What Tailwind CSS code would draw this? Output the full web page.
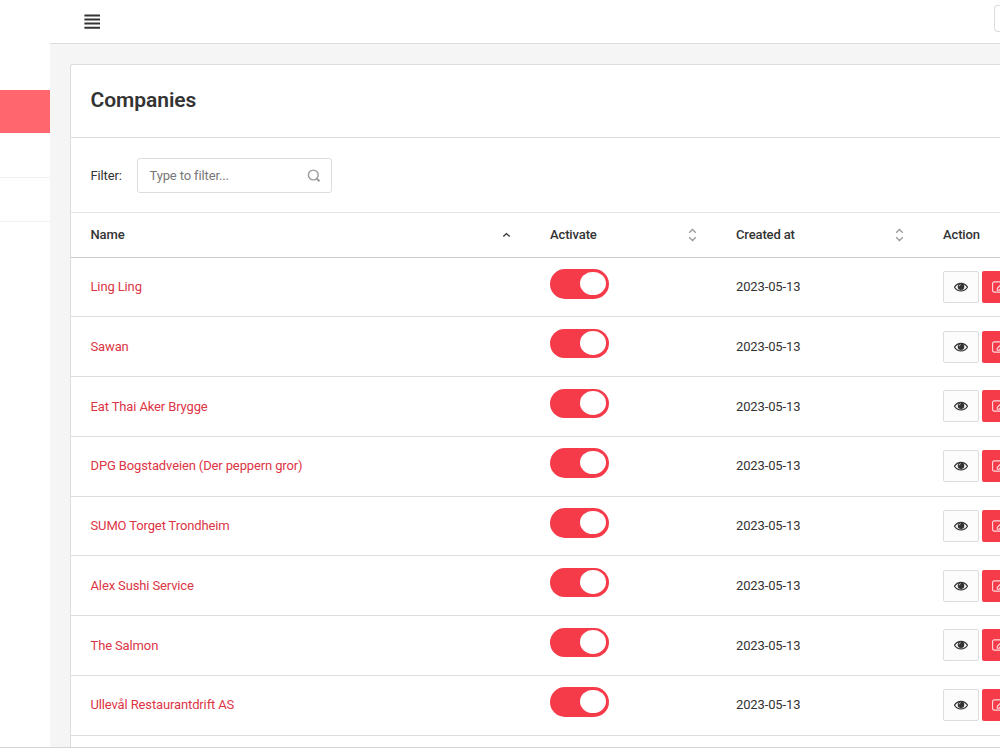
<!DOCTYPE html>
<html lang="en">
<head>
    <meta charset="UTF-8">
    <meta name="viewport" content="width=device-width, initial-scale=1.0">
    <title>Companies</title>
    <script src="https://cdn.jsdelivr.net/npm/@tailwindcss/browser@4"></script>
</head>
<body class="h-[750px] overflow-hidden bg-white font-['Roboto',sans-serif] text-[13px] tracking-[-0.13px] text-[#333]">
    <div class="flex h-[748px] w-full overflow-hidden border-b border-[#d5d5d5]">
        <!-- Sidebar -->
        <aside class="w-[50px] shrink-0 bg-white pt-[90px]">
            <a href="#" class="block h-[43px] bg-[#ff666d]"></a>
            <a href="#" class="block h-[45px] border-b border-[#f2f2f2]"></a>
            <a href="#" class="block h-[44px] border-b border-[#f2f2f2]"></a>
        </aside>

        <div class="flex min-w-0 flex-1 flex-col overflow-hidden bg-[#f5f5f5]">
            <!-- Navbar -->
            <header class="flex h-[43.5px] shrink-0 items-start border-b border-[#ddd] bg-white">
                <button class="mt-[14px] ml-[34px] shrink-0">
                    <svg class="h-[15px] w-4" viewBox="0 0 16 15" fill="#333">
                        <path d="M.4.4h16v2h-16zM.4 4.5h16v2h-16zM.4 8.6h16v2h-16zM.4 12.7h16v2h-16z"/>
                    </svg>
                </button>
                <div class="mt-[5px] ml-auto h-[27px] w-[6px] shrink-0 rounded-l border border-r-0 border-[#ddd]"></div>
            </header>

            <!-- Panel -->
            <main class="mt-5 ml-5 flex-1 overflow-hidden rounded-tl-[3px] border-t border-l border-[#ddd] bg-white">
                <div class="flex h-[73.5px] items-center border-b border-[#ddd] pl-[19.5px]">
                    <h1 class="text-[21px] font-semibold tracking-[-0.05px]">Companies</h1>
                </div>

                <div class="flex h-[74px] items-center pt-px pl-[19.5px]">
                    <span class="w-[46px]">Filter:</span>
                    <div class="flex h-[35px] w-[195.5px] items-center justify-between rounded-[3px] border border-[#ddd] pr-[10px] pl-3">
                        <span class="text-[#777]">Type to filter...</span>
                        <svg class="h-[14px] w-[14px]" viewBox="0 0 14 14" fill="none" stroke="#999">
                            <circle cx="6.3" cy="6" r="4.9" stroke-width="1.4"/>
                            <path d="M9.8 9.6l2.7 2.7" stroke-width="2"/>
                        </svg>
                    </div>
                </div>

                <table class="w-[1000px] table-fixed border-collapse">
                    <colgroup>
                        <col class="w-[459px]">
                        <col class="w-[186px]">
                        <col class="w-[207.5px]">
                        <col>
                    </colgroup>
                    <thead>
                        <tr class="h-[44.5px] border-t border-b border-t-[#e5e5e5] border-b-[#ccc] text-left">
                            <th class="pl-[19.5px] font-medium">
                                <div class="flex items-center justify-between pr-[19.5px]">Name
                                    <svg class="h-[14px] w-[9px]" viewBox="0 0 9 14" fill="none" stroke="#333" stroke-width="1.4"><path d="M1.3 8.6l3.2-3 3.2 3"/></svg>
                                </div>
                            </th>
                            <th class="pl-[20px] font-medium">
                                <div class="flex items-center justify-between pr-[19.5px]">Activate
                                    <svg class="h-[14px] w-[9px]" viewBox="0 0 9 14" fill="none" stroke="#999" stroke-width="1.3"><path d="M1.2 4.7l3.3-3.2 3.3 3.2M1.2 9.3l3.3 3.2 3.3-3.2"/></svg>
                                </div>
                            </th>
                            <th class="pl-[20px] font-medium">
                                <div class="flex items-center justify-between pr-[19.5px]">Created at
                                    <svg class="h-[14px] w-[9px]" viewBox="0 0 9 14" fill="none" stroke="#999" stroke-width="1.3"><path d="M1.2 4.7l3.3-3.2 3.3 3.2M1.2 9.3l3.3 3.2 3.3-3.2"/></svg>
                                </div>
                            </th>
                            <th class="pl-[19.5px] font-medium">Action</th>
                        </tr>
                    </thead>
                    <tbody id="companiesTableBody"></tbody>
                </table>
            </main>
        </div>
    </div>

    <script>
        const companies = [
            'Ling Ling',
            'Sawan',
            'Eat Thai Aker Brygge',
            'DPG Bogstadveien (Der peppern gror)',
            'SUMO Torget Trondheim',
            'Alex Sushi Service',
            'The Salmon',
            'Ullevål Restaurantdrift AS'
        ];

        document.getElementById('companiesTableBody').innerHTML = companies.map(name => `
            <tr class="h-[59.75px] border-b border-[#ddd]">
                <td class="pl-[19.5px]"><a href="#" class="text-[#dc3545]">${name}</a></td>
                <td class="pl-[20px]">
                    <div class="mb-[6px] flex h-[29.5px] w-[59px] justify-end rounded-full bg-[#f53b49] pt-[2.5px] pr-[3.5px]">
                        <div class="h-[23.5px] w-[26px] rounded-[50%] bg-white"></div>
                    </div>
                </td>
                <td class="pl-[20px]">2023-05-13</td>
                <td class="pl-[19.5px]">
                    <div class="flex gap-[3.5px]">
                        <button class="flex h-8 w-[35.5px] items-center justify-center rounded-[2px] border border-[#ddd] bg-[#fcfcfc]">
                            <svg class="h-[10px] w-[14px]" viewBox="0 0 14 10">
                                <path d="M.5 5.2C3.6.1 10.4.1 13.5 5.2 10.4 10.2 3.6 10.2.5 5.2z" fill="none" stroke="#333" stroke-width="1.2"/>
                                <circle cx="7" cy="4.7" r="3.3" fill="#333"/>
                                <path d="M5.2 4.2c0-.9.6-1.5 1.5-1.5" fill="none" stroke="#fff" stroke-width=".8"/>
                            </svg>
                        </button>
                        <button class="flex h-8 w-[35.5px] items-center rounded-[2px] bg-[#f53b49] pl-[10px]">
                            <svg class="h-3 w-[14px]" viewBox="0 0 14 12" fill="none" stroke="#ffdadd" stroke-width="1.1">
                                <path d="M12 7v2.5c0 1-.6 1.6-1.6 1.6H2.2C1.2 11.1.6 10.5.6 9.5V2.5C.6 1.5 1.2.9 2.2.9H9"/>
                                <path d="M5.3 9.2V7.3L11.5 1.2l1.7 1.7L7.2 9.2z"/>
                            </svg>
                        </button>
                    </div>
                </td>
            </tr>
        `).join('');
    </script>
</body>
</html>
